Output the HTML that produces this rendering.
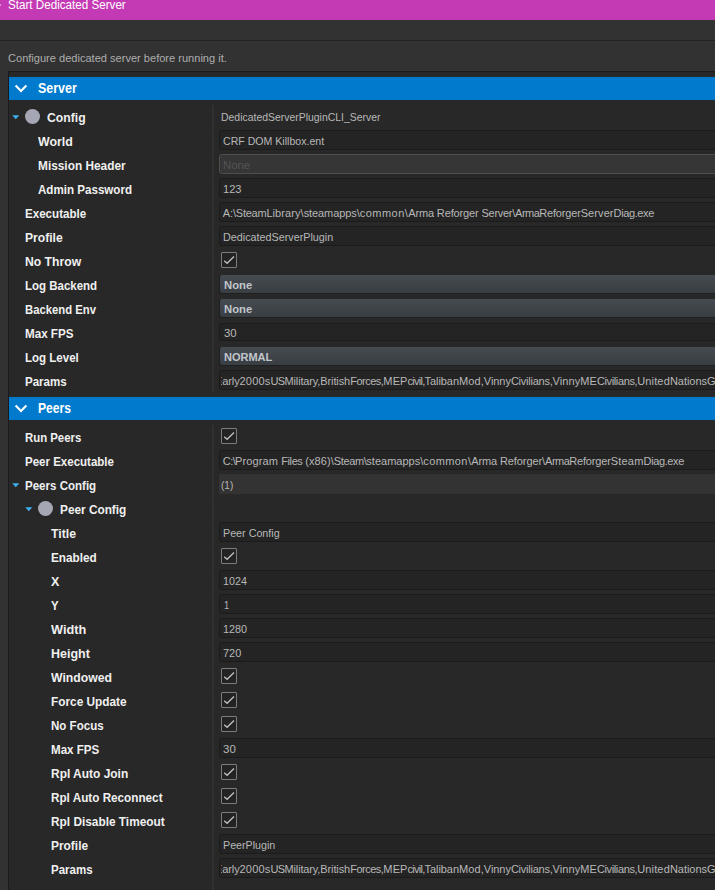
<!DOCTYPE html>
<html><head><meta charset="utf-8"><title>Start Dedicated Server</title>
<style>
html,body{margin:0;padding:0}
body{width:715px;height:890px;overflow:hidden;position:relative;background:#323232;font-family:"Liberation Sans",sans-serif}
.abs{position:absolute}
.title{position:absolute;left:0;top:0;width:715px;height:20px;background:#c43ab4}
.hr{position:absolute;left:0;top:40px;width:715px;height:1px;background:#232323}
.panel{position:absolute;left:8px;top:71px;width:707px;height:819px;background:#282828;border-left:1px solid #1b1b1d;border-top:1px solid #1b1b1d;box-sizing:border-box}
.hdr{position:absolute;left:9px;width:706px;height:23px;background:#007acc}
.vsep{position:absolute;left:212px;width:2px;background:repeating-linear-gradient(#303135 0 23px,#2b2b2d 23px 24px)}
.t{position:absolute;white-space:pre;line-height:24px;transform-origin:0 50%;}
.inp{position:absolute;left:219px;width:500px;height:20px;box-sizing:border-box;background:#242424;border:1px solid #1b1b1b;border-radius:3px}
.inp.dis{background:#363636;border-color:#4e4e4e}
.combo{position:absolute;left:219px;width:500px;height:19px;box-sizing:border-box;background:linear-gradient(#454b51,#393e43);border-radius:3px;border-bottom:1px solid #1f1f1f;border-left:1px solid #1f1f1f}
.cnt{position:absolute;left:219px;width:496px;height:20px;background:#333333}
.chk{position:absolute;left:221px;width:16px;height:16px;box-sizing:border-box;border:1px solid #7c7c7c;background:#232323;border-radius:1px}
.chk svg{position:absolute;left:0;top:0}
.circ{position:absolute;width:15.2px;height:15.2px;border-radius:50%;background:#a5a8b4}
.clip{position:absolute;left:221px;width:494px;height:24px;overflow:hidden}
</style></head><body>
<div class="title"></div><div class="abs" style="left:0;top:4px;width:1px;height:2px;background:#dc98d4"></div>
<div class="hr"></div>
<div class="panel"></div>
<div class="hdr" style="top:77px"></div>
<div class="hdr" style="top:397px"></div>
<div class="vsep" style="top:105px;height:287px"></div>
<div class="vsep" style="top:425px;height:465px"></div>
<div class="inp" style="top:130px"></div>
<div class="inp dis" style="top:154px"></div>
<div class="inp" style="top:178px"></div>
<div class="inp" style="top:202px"></div>
<div class="inp" style="top:226px"></div>
<div class="chk" style="top:252px"><svg width="14" height="14" viewBox="0 0 14 14"><path d="M2.2 7.7 L5.1 10.3 L12 3.5" fill="none" stroke="#c0c0c0" stroke-width="1.3"/></svg></div>
<div class="combo" style="top:275px"></div>
<div class="combo" style="top:299px"></div>
<div class="inp" style="top:323px;height:18px"></div>
<div class="combo" style="top:347px"></div>
<div class="inp" style="top:370px"></div>
<div class="chk" style="top:428px"><svg width="14" height="14" viewBox="0 0 14 14"><path d="M2.2 7.7 L5.1 10.3 L12 3.5" fill="none" stroke="#c0c0c0" stroke-width="1.3"/></svg></div>
<div class="inp" style="top:450px"></div>
<div class="cnt" style="top:474px"></div>
<div class="inp" style="top:522px"></div>
<div class="chk" style="top:548px"><svg width="14" height="14" viewBox="0 0 14 14"><path d="M2.2 7.7 L5.1 10.3 L12 3.5" fill="none" stroke="#c0c0c0" stroke-width="1.3"/></svg></div>
<div class="inp" style="top:570px"></div>
<div class="inp" style="top:594px"></div>
<div class="inp" style="top:618px"></div>
<div class="inp" style="top:642px"></div>
<div class="chk" style="top:668px"><svg width="14" height="14" viewBox="0 0 14 14"><path d="M2.2 7.7 L5.1 10.3 L12 3.5" fill="none" stroke="#c0c0c0" stroke-width="1.3"/></svg></div>
<div class="chk" style="top:692px"><svg width="14" height="14" viewBox="0 0 14 14"><path d="M2.2 7.7 L5.1 10.3 L12 3.5" fill="none" stroke="#c0c0c0" stroke-width="1.3"/></svg></div>
<div class="chk" style="top:716px"><svg width="14" height="14" viewBox="0 0 14 14"><path d="M2.2 7.7 L5.1 10.3 L12 3.5" fill="none" stroke="#c0c0c0" stroke-width="1.3"/></svg></div>
<div class="inp" style="top:738px"></div>
<div class="chk" style="top:764px"><svg width="14" height="14" viewBox="0 0 14 14"><path d="M2.2 7.7 L5.1 10.3 L12 3.5" fill="none" stroke="#c0c0c0" stroke-width="1.3"/></svg></div>
<div class="chk" style="top:788px"><svg width="14" height="14" viewBox="0 0 14 14"><path d="M2.2 7.7 L5.1 10.3 L12 3.5" fill="none" stroke="#c0c0c0" stroke-width="1.3"/></svg></div>
<div class="chk" style="top:812px"><svg width="14" height="14" viewBox="0 0 14 14"><path d="M2.2 7.7 L5.1 10.3 L12 3.5" fill="none" stroke="#c0c0c0" stroke-width="1.3"/></svg></div>
<div class="inp" style="top:834px"></div>
<div class="inp" style="top:858px"></div>
<svg class="abs" style="left:12px;top:115px" width="8" height="5" viewBox="0 0 8 5"><path d="M0.3 0.2 H7.3 L3.8 4.2 Z" fill="#3eb0ee"/></svg>
<div class="circ" style="left:25.0px;top:109.2px"></div>
<svg class="abs" style="left:12px;top:483px" width="8" height="5" viewBox="0 0 8 5"><path d="M0.3 0.2 H7.3 L3.8 4.2 Z" fill="#3eb0ee"/></svg>
<svg class="abs" style="left:25px;top:507px" width="8" height="5" viewBox="0 0 8 5"><path d="M0.3 0.2 H7.3 L3.8 4.2 Z" fill="#3eb0ee"/></svg>
<div class="circ" style="left:37.9px;top:501.2px"></div>
<svg class="abs" style="left:14px;top:84px" width="14" height="10" viewBox="0 0 14 10"><path d="M1.6 1.4 L7 6.9 L12.4 1.4" fill="none" stroke="#fff" stroke-width="2.2"/></svg>
<svg class="abs" style="left:14px;top:404px" width="14" height="10" viewBox="0 0 14 10"><path d="M1.6 1.4 L7 6.9 L12.4 1.4" fill="none" stroke="#fff" stroke-width="2.2"/></svg>
<span class="t" style="left:8.00px;top:-6.7px;font-size:13px;font-weight:400;color:#ffffff;transform:scaleX(0.8954)">Start Dedicated Server</span>
<span class="t" style="left:8.00px;top:46.3px;font-size:11.5px;font-weight:400;color:#adadad;transform:scaleX(0.9616)">Configure dedicated server before running it.</span>
<span class="t" style="left:38.00px;top:75.5px;font-size:14.2px;font-weight:700;color:#ffffff;transform:scaleX(0.8780)">Server</span>
<span class="t" style="left:38.00px;top:395.5px;font-size:14.2px;font-weight:700;color:#ffffff;transform:scaleX(0.8543)">Peers</span>
<span class="t" style="left:47.00px;top:105.5px;font-size:13px;font-weight:700;color:#f0f0f0;transform:scaleX(0.9388)">Config</span>
<span class="t" style="left:38.00px;top:129.5px;font-size:13px;font-weight:700;color:#f0f0f0;transform:scaleX(0.9521)">World</span>
<span class="t" style="left:38.00px;top:153.5px;font-size:13px;font-weight:700;color:#f0f0f0;transform:scaleX(0.9119)">Mission Header</span>
<span class="t" style="left:38.00px;top:177.5px;font-size:13px;font-weight:700;color:#f0f0f0;transform:scaleX(0.8913)">Admin Password</span>
<span class="t" style="left:25.00px;top:201.5px;font-size:13px;font-weight:700;color:#f0f0f0;transform:scaleX(0.8910)">Executable</span>
<span class="t" style="left:25.00px;top:225.5px;font-size:13px;font-weight:700;color:#f0f0f0;transform:scaleX(0.9322)">Profile</span>
<span class="t" style="left:25.00px;top:249.5px;font-size:13px;font-weight:700;color:#f0f0f0;transform:scaleX(0.9363)">No Throw</span>
<span class="t" style="left:25.00px;top:273.5px;font-size:13px;font-weight:700;color:#f0f0f0;transform:scaleX(0.8834)">Log Backend</span>
<span class="t" style="left:25.00px;top:297.5px;font-size:13px;font-weight:700;color:#f0f0f0;transform:scaleX(0.8696)">Backend Env</span>
<span class="t" style="left:25.00px;top:321.5px;font-size:13px;font-weight:700;color:#f0f0f0;transform:scaleX(0.8953)">Max FPS</span>
<span class="t" style="left:25.00px;top:345.5px;font-size:13px;font-weight:700;color:#f0f0f0;transform:scaleX(0.8864)">Log Level</span>
<span class="t" style="left:25.00px;top:369.5px;font-size:13px;font-weight:700;color:#f0f0f0;transform:scaleX(0.8883)">Params</span>
<span class="t" style="left:25.00px;top:425.5px;font-size:13px;font-weight:700;color:#f0f0f0;transform:scaleX(0.8754)">Run Peers</span>
<span class="t" style="left:25.00px;top:449.5px;font-size:13px;font-weight:700;color:#f0f0f0;transform:scaleX(0.8856)">Peer Executable</span>
<span class="t" style="left:25.00px;top:473.5px;font-size:13px;font-weight:700;color:#f0f0f0;transform:scaleX(0.8876)">Peers Config</span>
<span class="t" style="left:60.00px;top:497.5px;font-size:13px;font-weight:700;color:#f0f0f0;transform:scaleX(0.9087)">Peer Config</span>
<span class="t" style="left:51.00px;top:521.5px;font-size:13px;font-weight:700;color:#f0f0f0;transform:scaleX(0.9453)">Title</span>
<span class="t" style="left:51.00px;top:545.5px;font-size:13px;font-weight:700;color:#f0f0f0;transform:scaleX(0.9038)">Enabled</span>
<span class="t" style="left:51.00px;top:569.5px;font-size:13px;font-weight:700;color:#f0f0f0;transform:scaleX(0.9599)">X</span>
<span class="t" style="left:51.00px;top:593.5px;font-size:13px;font-weight:700;color:#f0f0f0;transform:scaleX(0.8783)">Y</span>
<span class="t" style="left:51.00px;top:617.5px;font-size:13px;font-weight:700;color:#f0f0f0;transform:scaleX(0.9785)">Width</span>
<span class="t" style="left:51.00px;top:641.5px;font-size:13px;font-weight:700;color:#f0f0f0;transform:scaleX(0.9597)">Height</span>
<span class="t" style="left:51.00px;top:665.5px;font-size:13px;font-weight:700;color:#f0f0f0;transform:scaleX(0.9395)">Windowed</span>
<span class="t" style="left:51.00px;top:689.5px;font-size:13px;font-weight:700;color:#f0f0f0;transform:scaleX(0.9106)">Force Update</span>
<span class="t" style="left:51.00px;top:713.5px;font-size:13px;font-weight:700;color:#f0f0f0;transform:scaleX(0.8888)">No Focus</span>
<span class="t" style="left:51.00px;top:737.5px;font-size:13px;font-weight:700;color:#f0f0f0;transform:scaleX(0.8896)">Max FPS</span>
<span class="t" style="left:51.00px;top:761.5px;font-size:13px;font-weight:700;color:#f0f0f0;transform:scaleX(0.9188)">Rpl Auto Join</span>
<span class="t" style="left:51.00px;top:785.5px;font-size:13px;font-weight:700;color:#f0f0f0;transform:scaleX(0.9013)">Rpl Auto Reconnect</span>
<span class="t" style="left:51.00px;top:809.5px;font-size:13px;font-weight:700;color:#f0f0f0;transform:scaleX(0.9117)">Rpl Disable Timeout</span>
<span class="t" style="left:51.00px;top:833.5px;font-size:13px;font-weight:700;color:#f0f0f0;transform:scaleX(0.9170)">Profile</span>
<span class="t" style="left:51.00px;top:857.5px;font-size:13px;font-weight:700;color:#f0f0f0;transform:scaleX(0.8861)">Params</span>
<span class="t" style="left:221.00px;top:105.0px;font-size:11px;font-weight:400;color:#b8b8b8;transform:scaleX(0.9486)">DedicatedServerPluginCLI_Server</span>
<span class="t" style="left:223.00px;top:128.5px;font-size:11px;font-weight:400;color:#b8b8b8;transform:scaleX(0.9620)">CRF DOM Killbox.ent</span>
<span class="t" style="left:223.00px;top:152.5px;font-size:11px;font-weight:400;color:#545454;transform:scaleX(1.0245)">None</span>
<span class="t" style="left:223.00px;top:176.5px;font-size:11px;font-weight:400;color:#b8b8b8;transform:scaleX(1.0078)">123</span>
<span class="t" style="left:223.00px;top:224.5px;font-size:11px;font-weight:400;color:#b8b8b8;transform:scaleX(0.9792)">DedicatedServerPlugin</span>
<span class="t" style="left:224.00px;top:272.5px;font-size:11px;font-weight:700;color:#c2c7cc;transform:scaleX(1.0249)">None</span>
<span class="t" style="left:224.00px;top:296.5px;font-size:11px;font-weight:700;color:#c2c7cc;transform:scaleX(1.0249)">None</span>
<span class="t" style="left:224.00px;top:320.5px;font-size:11px;font-weight:400;color:#b8b8b8;transform:scaleX(1.0341)">30</span>
<span class="t" style="left:224.00px;top:344.5px;font-size:11px;font-weight:700;color:#c2c7cc;transform:scaleX(0.9998)">NORMAL</span>
<span class="t" style="left:221.00px;top:472.5px;font-size:11px;font-weight:400;color:#b8b8b8;transform:scaleX(0.9105)">(1)</span>
<span class="t" style="left:223.00px;top:520.5px;font-size:11px;font-weight:400;color:#b8b8b8;transform:scaleX(0.9751)">Peer Config</span>
<span class="t" style="left:223.00px;top:568.5px;font-size:11px;font-weight:400;color:#b8b8b8;transform:scaleX(0.9748)">1024</span>
<span class="t" style="left:224.00px;top:592.5px;font-size:11px;font-weight:400;color:#b8b8b8;transform:scaleX(0.8400)">1</span>
<span class="t" style="left:223.00px;top:616.5px;font-size:11px;font-weight:400;color:#b8b8b8;transform:scaleX(0.9831)">1280</span>
<span class="t" style="left:223.00px;top:640.5px;font-size:11px;font-weight:400;color:#b8b8b8;transform:scaleX(0.9948)">720</span>
<span class="t" style="left:223.00px;top:736.5px;font-size:11px;font-weight:400;color:#b8b8b8;transform:scaleX(1.0430)">30</span>
<span class="t" style="left:223.00px;top:832.5px;font-size:11px;font-weight:400;color:#b8b8b8;transform:scaleX(0.9712)">PeerPlugin</span>
<span class="t" style="left:222.80px;top:200.5px;font-size:11px;color:#b8b8b8"><span style="letter-spacing:-0.146px">A:\</span><span style="letter-spacing:-0.239px">Steam</span><span style="letter-spacing:0.066px">Library\</span><span style="letter-spacing:-0.078px">steamapps\</span><span style="letter-spacing:0.467px">common\</span><span style="letter-spacing:-0.146px">Arma </span><span style="letter-spacing:-0.140px">Reforger </span><span style="letter-spacing:-0.265px">Server\</span><span style="letter-spacing:-0.520px">Arma</span><span style="letter-spacing:-0.175px">Reforger</span><span style="letter-spacing:0.085px">Server</span><span style="letter-spacing:-0.391px">Diag.exe</span></span>
<span class="t" style="left:222.80px;top:448.5px;font-size:11px;color:#b8b8b8"><span style="letter-spacing:-0.582px">C:\</span><span style="letter-spacing:0.108px">Program </span><span style="letter-spacing:-0.397px">Files </span><span style="letter-spacing:0.096px">(x86)\</span><span style="letter-spacing:-0.391px">Steam\</span><span style="letter-spacing:0.004px">steamapps\</span><span style="letter-spacing:0.409px">common\</span><span style="letter-spacing:-0.149px">Arma </span><span style="letter-spacing:-0.083px">Reforger\</span><span style="letter-spacing:-0.520px">Arma</span><span style="letter-spacing:-0.175px">Reforger</span><span style="letter-spacing:0.221px">Steam</span><span style="letter-spacing:-0.391px">Diag.exe</span></span>
<div class="clip" style="top:368.5px"><span class="t" style="left:-5.91px;top:0;font-size:11px;color:#b8b8b8"><span style="letter-spacing:-0.130px">E</span><span style="letter-spacing:-0.130px">arly</span><span style="letter-spacing:0.183px">2000s</span><span style="letter-spacing:-0.591px">US</span><span style="letter-spacing:-0.151px">Military,</span><span style="letter-spacing:-0.095px">British</span><span style="letter-spacing:-0.496px">Forces,</span><span style="letter-spacing:0.119px">MEP</span><span style="letter-spacing:-0.732px">civil,</span><span style="letter-spacing:-0.063px">Taliban</span><span style="letter-spacing:0.083px">Mod,</span><span style="letter-spacing:-0.042px">Vinny</span><span style="letter-spacing:-0.232px">Civilians,</span><span style="letter-spacing:0.058px">Vinny</span><span style="letter-spacing:0.100px">ME</span><span style="letter-spacing:-0.372px">Civilians,</span><span style="letter-spacing:0.151px">United</span><span style="letter-spacing:-0.028px">Nations</span><span style="letter-spacing:-0.028px">G</span></span></div>
<div class="clip" style="top:856.5px"><span class="t" style="left:-5.91px;top:0;font-size:11px;color:#b8b8b8"><span style="letter-spacing:-0.130px">E</span><span style="letter-spacing:-0.130px">arly</span><span style="letter-spacing:0.183px">2000s</span><span style="letter-spacing:-0.591px">US</span><span style="letter-spacing:-0.151px">Military,</span><span style="letter-spacing:-0.095px">British</span><span style="letter-spacing:-0.496px">Forces,</span><span style="letter-spacing:0.119px">MEP</span><span style="letter-spacing:-0.732px">civil,</span><span style="letter-spacing:-0.063px">Taliban</span><span style="letter-spacing:0.083px">Mod,</span><span style="letter-spacing:-0.042px">Vinny</span><span style="letter-spacing:-0.232px">Civilians,</span><span style="letter-spacing:0.058px">Vinny</span><span style="letter-spacing:0.100px">ME</span><span style="letter-spacing:-0.372px">Civilians,</span><span style="letter-spacing:0.151px">United</span><span style="letter-spacing:-0.028px">Nations</span><span style="letter-spacing:-0.028px">G</span></span></div>
</body></html>
